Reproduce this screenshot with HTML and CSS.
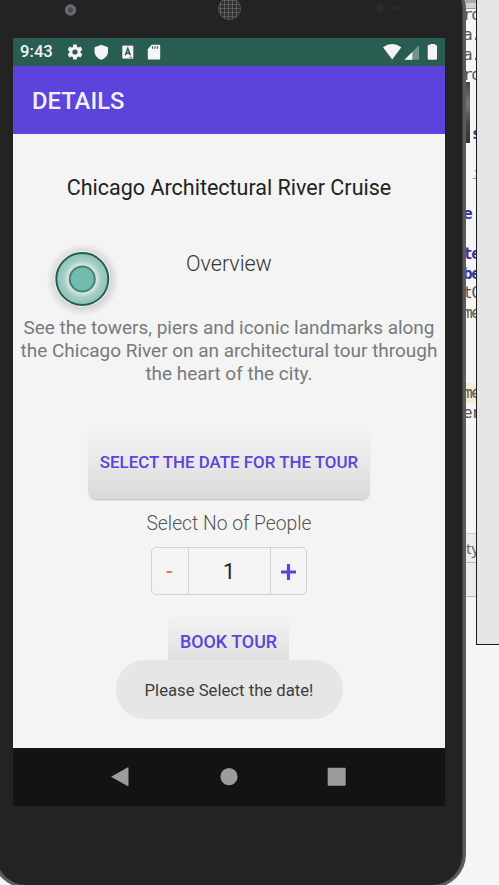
FILE: index.html
```html
<!DOCTYPE html>
<html lang="en">
<head>
<meta charset="utf-8">
<title>Details</title>
<link rel="stylesheet" href="styles.css">
</head>
<body>
<div class="desktop">
  <div class="editor">
    <div class="editor-top"></div>
    <div class="code">
      <div class="line">ro</div>
      <div class="line">a.</div>
      <div class="line">a.</div>
      <div class="line">ro</div>
      <div class="line"></div>
      <div class="line"></div>
      <div class="line kw shift">s</div>
      <div class="line"></div>
      <div class="line hint shift">i</div>
      <div class="line"></div>
      <div class="line kw">e</div>
      <div class="line"></div>
      <div class="line kw">te</div>
      <div class="line kw">be</div>
      <div class="line">tC</div>
      <div class="line">me</div>
      <div class="line"></div>
      <div class="line"></div>
      <div class="line"></div>
      <div class="line current">me</div>
      <div class="line">er</div>
    </div>
    <div class="crumb">ty</div>
    <div class="crumb-foot"></div>
  </div>
  <div class="panel"></div>
  <div class="side-key"></div>
  <div class="phone">
    <div class="bezel">
      <svg width="452" height="38" viewBox="0 0 452 38">
        <defs>
          <pattern id="mesh" width="4" height="4" patternUnits="userSpaceOnUse"><path d="M0 0H4M0 0V4" stroke="#777" stroke-width="1.2"/></pattern>
          <radialGradient id="lens"><stop offset="0" stop-color="#34347c"/><stop offset=".35" stop-color="#4a4a58"/><stop offset=".65" stop-color="#777"/><stop offset="1" stop-color="#444"/></radialGradient>
        </defs>
        <circle cx="70.5" cy="10" r="6" fill="url(#lens)"/>
        <circle cx="229.500" cy="8.500" r="11.300" fill="#303030"/>
        <circle cx="229.500" cy="8.500" r="11" fill="url(#mesh)" stroke="#555" stroke-width=".8"/>
        <circle cx="379.500" cy="8" r="4" fill="#2b2b2b"/>
        <circle cx="395" cy="8" r="3" fill="#2a2a2a"/>
      </svg>
    </div>
    <div class="screen">
      <div class="status">
        <span class="clock">9:43</span>
        <svg class="status-left" width="100" height="28" viewBox="0 0 100 28" fill="#f4f4f4">
          <g transform="translate(12 14)">
            <g><rect x="-2" y="-7.500" width="4" height="15" rx=".7"/><rect x="-2" y="-7.500" width="4" height="15" rx=".7" transform="rotate(60)"/><rect x="-2" y="-7.500" width="4" height="15" rx=".7" transform="rotate(120)"/></g>
            <circle r="5.600"/><circle r="2.600" fill="#2a5d52"/>
          </g>
          <path d="M38.300 6.800 45 9.300V13.500c0 3.800-2.600 7-6.700 8.300-4.100-1.300-6.700-4.500-6.700-8.300V9.300z"/>
          <path d="M59.300 7.600H70.300V20.600H59.300z"/>
          <path d="M62.300 17.300 64.800 10.500 67.300 17.300M63.300 15.200H66.300" fill="none" stroke="#2a5d52" stroke-width="1.500"/>
          <path d="M66.500 19.300H69" stroke="#2a5d52" stroke-width=".8"/>
          <path d="M88.600 6.800H96q1.200 0 1.200 1.200V20.400q0 1.200-1.200 1.200H86q-1.200 0-1.200-1.200V11.200z"/>
          <path d="M89.500 8.300V10.700M92 8.300V10.700M94.500 8.300V10.700" stroke="#2a5d52" stroke-width="1.200"/>
        </svg>
        <svg class="status-right" width="56" height="28" viewBox="0 0 56 28" fill="#f4f4f4">
          <path d="M0 9.300Q9.200 2.500 18.300 9.300L9.200 21.500z"/>
          <path d="M36 7.300V21.800H21.500z" fill="#72948c"/>
          <path d="M29.300 14V21.800H21.500z"/>
          <path d="M47.500 6.800V6h4.500V6.800H52.500q1.500 0 1.500 1.500V20.600q0 1.200-1.200 1.200H45.900q-1.200 0-1.200-1.200V8.300q0-1.500 1.500-1.500z"/>
        </svg>
      </div>
      <div class="appbar">DETAILS</div>
      <div class="content">
        <h1 class="title">Chicago Architectural River Cruise</h1>
        <div class="overview-row">
          <svg class="touch" width="84" height="84" viewBox="0 0 84 84">
            <defs>
              <radialGradient id="halo"><stop offset=".62" stop-color="#999" stop-opacity=".6"/><stop offset="1" stop-color="#bbb" stop-opacity="0"/></radialGradient>
              <radialGradient id="ring"><stop offset=".48" stop-color="#e9eeec"/><stop offset=".72" stop-color="#a5cec5"/><stop offset="1" stop-color="#8cc1b6"/></radialGradient>
            </defs>
            <circle cx="43" cy="43" r="37" fill="url(#halo)"/>
            <circle cx="42.300" cy="42" r="28" fill="#f4f5f5"/>
            <circle cx="42.300" cy="42" r="26" fill="url(#ring)" stroke="#245e52" stroke-width="2"/>
            <circle cx="42.300" cy="42" r="12.500" fill="#70bdae" stroke="#487f75" stroke-width="2"/>
          </svg>
          <h2 class="overview">Overview</h2>
        </div>
        <p class="desc">See the towers, piers and iconic landmarks along<br>the Chicago River on an architectural tour through<br>the heart of the city.</p>
        <button class="btn date">SELECT THE DATE FOR THE TOUR</button>
        <div class="people">Select No of People</div>
        <div class="stepper">
          <span class="minus">-</span>
          <span class="count">1</span>
          <span class="plus"><svg width="15" height="16" viewBox="0 0 15 16"><path d="M7.500 0V16M0 8H15" stroke="#5b43dc" stroke-width="3.200"/></svg></span>
        </div>
        <button class="btn book">BOOK TOUR</button>
        <div class="toast">Please Select the date!</div>
      </div>
      <div class="nav">
        <svg width="432" height="58" viewBox="0 0 432 58" fill="#9c9c9c">
          <path d="M98 28.700 114.500 19.500Q115.500 19 115.500 20V37.500Q115.500 38.500 114.500 38z"/>
          <circle cx="216" cy="28.700" r="8.600"/>
          <rect x="314.700" y="19.800" width="18" height="18" rx="1"/>
        </svg>
      </div>
    </div>
  </div>
</div>
</body>
</html>
```
FILE: styles.css
```css
* { box-sizing: border-box; }
body { margin: 0; font-family: Roboto, "Liberation Sans", sans-serif; }
.desktop { position: relative; width: 499px; height: 885px; overflow: hidden; background: #f5f5f5; }

/* windows on the desktop */
.editor { position: absolute; left: 462px; top: 0; width: 15px; height: 597px; overflow: hidden; }
.editor-top { height: 9px; background: #d2d2d2; border-top: 3px solid #aaa; border-bottom: 1px solid #999; }
.code { height: 524px; margin-top: -4px; }
.line { height: 19.900px; line-height: 20px; font-family: "DejaVu Sans Mono", monospace; font-size: 16px; letter-spacing: -1.300px; padding-left: 1px; color: #555; white-space: nowrap; }
.kw { color: #33339a; font-weight: bold; }
.line.shift { padding-left: 10px; }
.hint { color: #999; font-style: italic; }
.current { background: #f2ecd2; }
.crumb { margin-top: 4px; height: 30px; line-height: 29px; padding-left: 4px; font-size: 15px; color: #666; background: #ececec; border-top: 1px solid #ccc; border-bottom: 1px solid #bbb; font-family: "Noto Sans", sans-serif; }
.crumb-foot { height: 34px; background: #ebebeb; border-bottom: 1px solid #bbb; }
.panel { position: absolute; left: 476px; top: -1px; width: 30px; height: 646px; background: #e6e6e6; border: 1px solid #1c1c1c; }
.side-key { position: absolute; left: 465px; top: 82px; width: 5px; height: 61px; background: linear-gradient(#444, #777 35%, #444 70%, #333); }

.phone { position: absolute; left: -8px; top: -12px; width: 474px; height: 900px; padding: 12px 17px 0 21px; background: #232323; border: solid #5c5c5c; border-width: 0 3px 3px 4px; border-radius: 24px 20px 34px 34px; box-shadow: inset -1px 0 #404040; }
.bezel { height: 38px; margin-left: -17px; }
.bezel svg { display: block; }
.screen { width: 432px; height: 768px; margin-left: -4px; background: #f4f4f4; display: flex; flex-direction: column; }
.status { height: 28px; flex: none; display: flex; align-items: center; background: #2a5d52; padding: 0 6px 0 7px; }
.clock { width: 43px; font-size: 16.700px; font-weight: 500; color: #f4f4f4; line-height: 28px; }
.status-right { margin-left: auto; }
.appbar { height: 68px; flex: none; padding-left: 19px; font-size: 23.800px; font-weight: 500; line-height: 71px; color: #f0effb; background: #5b43dc; }
.content { height: 614px; flex: none; display: flex; flex-direction: column; align-items: center; }
.title { margin: 40px 0 0; font-size: 21.500px; line-height: 28px; font-weight: 400; color: #222; white-space: nowrap; }
.overview-row { width: 100%; height: 84px; margin-top: 35px; display: flex; }
.touch { margin-left: 27px; flex: none; }
.overview { margin: 13px 0 0 62px; font-size: 21.500px; line-height: 28px; font-weight: 300; color: #333; }
.desc { margin: -5px 0 0; text-align: center; font-size: 18.970px; line-height: 23px; color: #777a7d; white-space: nowrap; }
.btn { border: 0; padding: 0; display: block; flex: none; font-family: inherit; font-weight: 500; color: #5b43dc; white-space: nowrap; background: linear-gradient(#f4f4f4, #e8e8e8 50%, #d9d9d9); }
.date { width: 282px; height: 74px; margin: 40px 0 0; font-size: 16.900px; border-radius: 8px; box-shadow: 0 2px 2px -1px #bbb; }
.people { margin-top: 11px; font-size: 19.300px; line-height: 28px; font-weight: 300; color: #555; white-space: nowrap; }
.stepper { width: 156px; height: 48px; margin: 9px 1px 0 0; flex: none; display: flex; border: 1.500px solid #d2d2d2; border-radius: 5px; }
.stepper span { display: flex; align-items: center; justify-content: center; }
.minus { width: 36px; font-size: 20px; font-weight: 500; color: #e87452; }
.count { width: 83px; font-size: 21.500px; padding-top: 1px; color: #222; border: solid #d2d2d2; border-width: 0 1px; }
.plus { flex: 1; padding-top: 1px; }
.book { width: 121px; height: 57px; margin: 18px 1px 0 0; font-size: 17.900px; border-radius: 5px; }
.toast { position: relative; width: 227px; height: 59px; margin: -10px 0 0; flex: none; line-height: 61px; text-align: center; font-size: 16.700px; color: #3d3d3d; background: rgba(229, 229, 229, .96); border-radius: 29px; white-space: nowrap; }
.nav { height: 58px; flex: none; background: #131313; }
.nav svg { display: block; }
```
